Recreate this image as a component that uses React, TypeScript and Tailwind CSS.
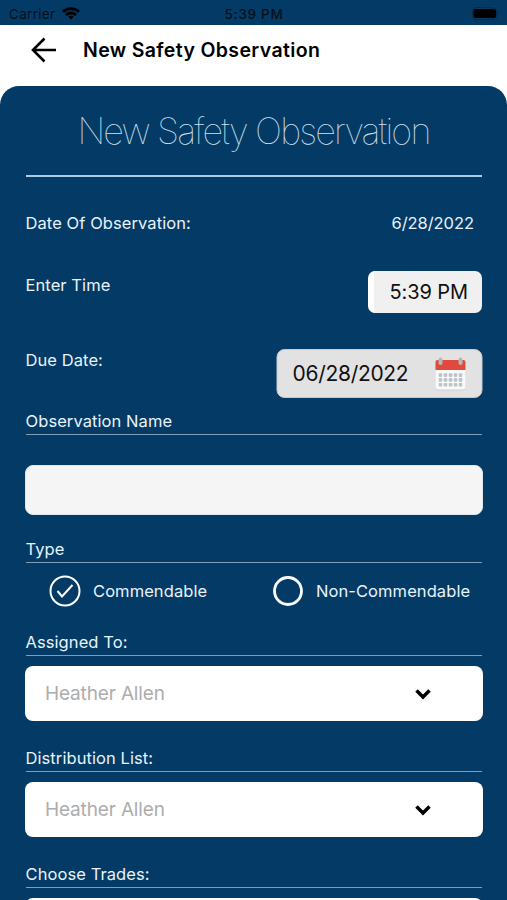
import React from 'react';

const selects = [
  { id: 'assigned', label: 'Assigned To:', value: 'Heather Allen' },
  { id: 'distribution', label: 'Distribution List:', value: 'Heather Allen' },
  { id: 'trades', label: 'Choose Trades:', value: '' },
];

function StatusBar() {
  return (
    <div className="grid h-[25px] shrink-0 grid-cols-3 items-center bg-[#043b66] pt-[3px] pr-[8px] pl-[9px] text-[13.5px] leading-5 text-[#03101c]">
      <div className="flex items-center gap-[7px]">
        <span className="tracking-[0.3px]">Carrier</span>
        <svg className="mt-[-1px] h-[13px] w-[18px]" viewBox="0 0 18 13" fill="none" stroke="#000" strokeWidth="2.8">
          <path d="M1 4.8C5.4 .5 12.6 .5 17 4.8" />
          <path d="M4 8C6.8 5.3 11.2 5.3 14 8" />
          <path d="M9 12.6 6.2 9.8C7.8 8.4 10.2 8.4 11.8 9.8Z" fill="#000" stroke="none" />
        </svg>
      </div>
      <span className="text-center font-medium tracking-[0.7px] whitespace-nowrap">5:39 PM</span>
      <svg className="mt-[-1px] h-[13px] w-[27px] justify-self-end" viewBox="0 0 27 13">
        <rect x="0.5" y="0.5" width="24" height="12" rx="3.5" fill="none" stroke="#032c4d" />
        <rect x="1.5" y="2" width="22.5" height="9" rx="2" fill="#000" />
        <path d="M25.5 4.5c1.3.6 1.3 3.4 0 4z" fill="#032c4d" />
      </svg>
    </div>
  );
}

function CalendarIcon() {
  const cols = [0, 1, 2, 3, 4];
  const rows = [0, 1, 2];
  return (
    <svg className="h-[34px] w-[32px]" viewBox="0 0 32 34">
      <path d="M1 12h30v19a2.5 2.5 0 0 1-2.5 2.5h-25A2.5 2.5 0 0 1 1 31z" fill="#cbd0d3" />
      <path d="M1 12h30v18a2.5 2.5 0 0 1-2.5 2.5h-25A2.5 2.5 0 0 1 1 30z" fill="#f8f9f9" />
      <path d="M1 13V5a2 2 0 0 1 2-2h26a2 2 0 0 1 2 2v8z" fill="#e04a3e" />
      <rect x="4" y="0.5" width="4" height="7.5" rx="2" fill="#b7b9b9" />
      <rect x="24" y="0.5" width="4" height="7.5" rx="2" fill="#b7b9b9" />
      {rows.map((r) =>
        cols.map((c) => (
          <rect key={`${r}-${c}`} x={4.2 + c * 5} y={16.3 + r * 4.8} width="3.6" height="3.6" rx="0.8" fill="#bdc3c7" />
        ))
      )}
    </svg>
  );
}

function SectionLabel({ children }: { children: React.ReactNode }) {
  return (
    <div className="ml-[0.5px] h-6 border-b border-[#7f9db6] pt-px text-[16.5px] leading-[18px] tracking-[0.08px]">
      {children}
    </div>
  );
}

export default function App() {
  return (
    <div className="flex h-[900px] w-[507px] flex-col overflow-hidden bg-white font-['Inter','Liberation_Sans',sans-serif]">
      <StatusBar />

      <header className="flex h-[61px] shrink-0 items-start pt-[11px] pl-[31px]">
        <svg className="mt-px h-[26px] w-[26px]" viewBox="0 0 26 26" fill="none" stroke="#000" strokeWidth="2.6">
          <path d="M25 13H2.5M13.5 1.5 2 13l11.5 11.5" />
        </svg>
        <h1 className="ml-[26px] text-[19.5px] leading-[28px] font-semibold tracking-[0.36px] text-black">
          New Safety Observation
        </h1>
      </header>

      <main className="grow rounded-t-[19px] bg-[#043b66] px-[25px] text-[#e9f2f9]">
        <h2 className="h-[89px] pt-[25px] text-center text-[36px] leading-[40px] font-thin tracking-[-1.83px] whitespace-nowrap text-[#d3e3f0]">
          New Safety Observation
        </h2>
        <div className="ml-px h-[2px] w-[456px] bg-[#a9cce6]" />

        <div className="flex h-[94px] justify-between pt-[36px] pr-[8px] pl-[0.5px] text-[16.5px] leading-5 tracking-[0.08px]">
          <span>Date Of Observation:</span>
          <span className="tracking-[-0.05px]">6/28/2022</span>
        </div>

        <div className="flex h-[78px] justify-between pl-[0.5px] text-[16.5px] leading-5 tracking-[0.08px]">
          <span className="pt-[4px]">Enter Time</span>
          <button className="flex h-[42px] w-[114px] items-center justify-end rounded-[7px] border-l-[6px] border-white bg-[#f0f0f1] pr-[14px] text-[20px] tracking-[-0.1px] text-[#111]">
            5:39 PM
          </button>
        </div>

        <div className="flex h-[62px] justify-between pl-[0.5px] text-[16.5px] leading-5 tracking-[0.08px]">
          <span className="pt-px">Due Date:</span>
          <button className="flex h-[49px] w-[206px] translate-x-[0.5px] items-center justify-between rounded-[8px] border border-[#c4cbd1] bg-[#e2e2e2] pr-[15px] pl-[15px] text-[21px] tracking-[-0.3px] text-[#111]">
            06/28/2022
            <CalendarIcon />
          </button>
        </div>

        <SectionLabel>Observation Name</SectionLabel>
        <input
          type="text"
          aria-label="Observation Name"
          className="mt-[30px] mb-[24px] block h-[50px] w-[458px] rounded-[8px] border border-[#dfe6ec] bg-[#f5f5f5] px-4 text-black"
        />

        <SectionLabel>Type</SectionLabel>
        <div className="flex h-[69px] pt-[12px] pl-[24px] text-[16.5px] leading-8 tracking-[0.08px]">
          <div className="flex h-8 w-[223px] items-center">
            <svg className="mr-[12px] h-8 w-8" viewBox="0 0 32 32" fill="none" stroke="#fff">
              <circle cx="16" cy="16" r="14.5" strokeWidth="2" />
              <path d="M8.5 16 13 21.5 23.5 10" strokeWidth="2" />
            </svg>
            Commendable
          </div>
          <div className="flex h-8 items-center">
            <svg className="mr-[12px] h-8 w-8" viewBox="0 0 32 32" fill="none" stroke="#fff">
              <circle cx="16" cy="16" r="13.5" strokeWidth="2.8" />
            </svg>
            Non-Commendable
          </div>
        </div>

        {selects.map((select) => (
          <div key={select.id} className="h-[116px]">
            <SectionLabel>{select.label}</SectionLabel>
            <button className="mt-[10px] flex h-[55px] w-[458px] items-center justify-between rounded-[8px] bg-white pr-[51px] pl-[20px] text-[19px] tracking-[-0.15px] text-[#adadad]">
              <span className="pt-px">{select.value}</span>
              <svg className="h-[12px] w-[18px]" viewBox="0 0 18 12" fill="none" stroke="#000" strokeWidth="3.5">
                <path d="M2.5 2.5 9 9l6.5-6.5" />
              </svg>
            </button>
          </div>
        ))}
      </main>
    </div>
  );
}
